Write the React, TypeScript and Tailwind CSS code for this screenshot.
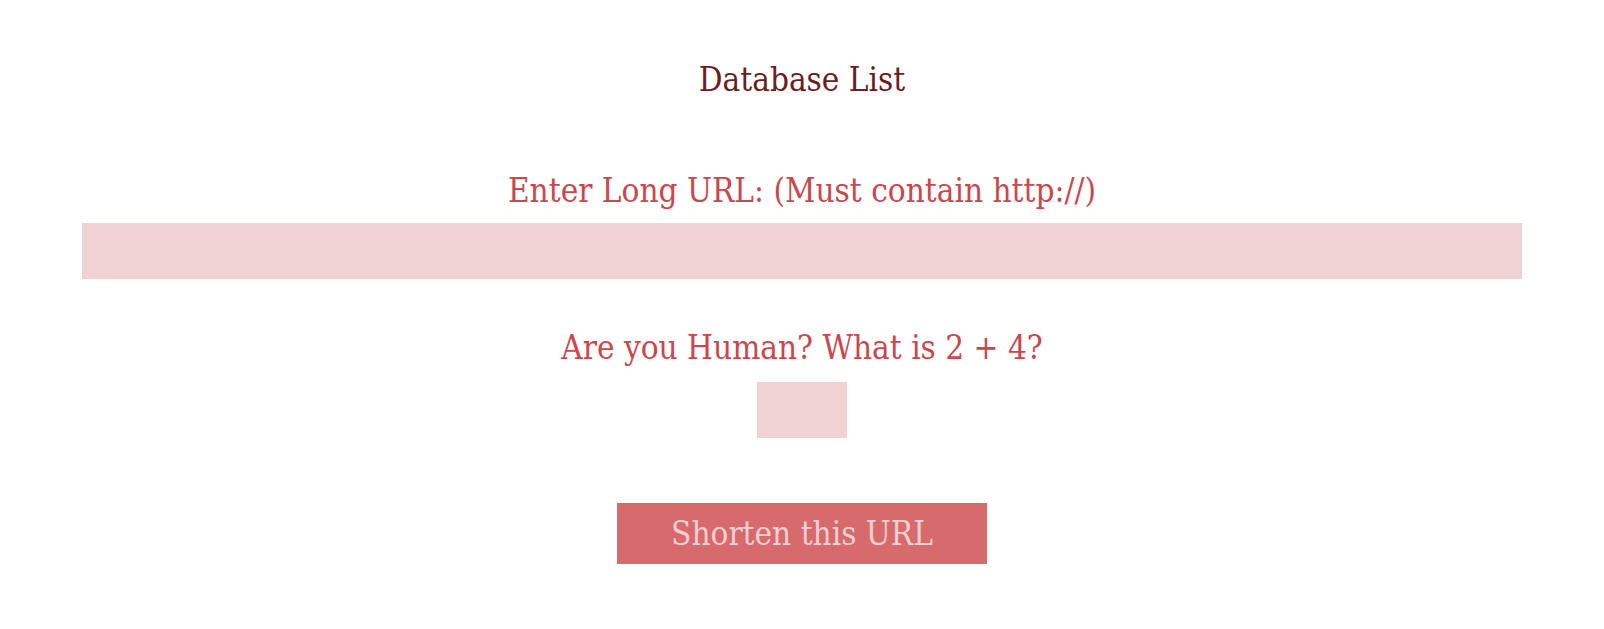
import React, { useState } from "react";

const App: React.FC = () => {
  const [url, setUrl] = useState("");
  const [answer, setAnswer] = useState("");

  return (
    <div className="min-h-screen bg-white flex flex-col items-center px-[82px] pt-[60px] font-['DejaVu_Serif_Condensed','DejaVu_Serif',serif] font-stretch-condensed">
      <h1 className="text-[33px] leading-[40px] text-[#6b1d1f]">Database List</h1>

      <form
        className="w-full flex flex-col items-center mt-[71px]"
        onSubmit={(e) => e.preventDefault()}
      >
        <label className="text-[33px] leading-[40px] text-[#c8484e]">
          Enter Long URL: (Must contain http://)
        </label>
        <input
          className="w-full h-[56px] mt-[12px] bg-[#f0d2d2] border-0 outline-none px-3 text-[20px]"
          value={url}
          onChange={(e) => setUrl(e.target.value)}
        />

        <label className="text-[33px] leading-[40px] text-[#c8484e] mt-[49px]">
          Are you Human? What is 2 + 4?
        </label>
        <input
          className="w-[90px] h-[56px] mt-[14px] bg-[#f0d2d2] border-0 outline-none px-2 text-[20px] text-center"
          value={answer}
          onChange={(e) => setAnswer(e.target.value)}
        />

        <button
          type="submit"
          className="w-[370px] h-[61px] mt-[65px] bg-[#d66a6d] text-[#f7d0d0] text-[33px] leading-[40px]"
        >
          Shorten this URL
        </button>
      </form>
    </div>
  );
};

export default App;
